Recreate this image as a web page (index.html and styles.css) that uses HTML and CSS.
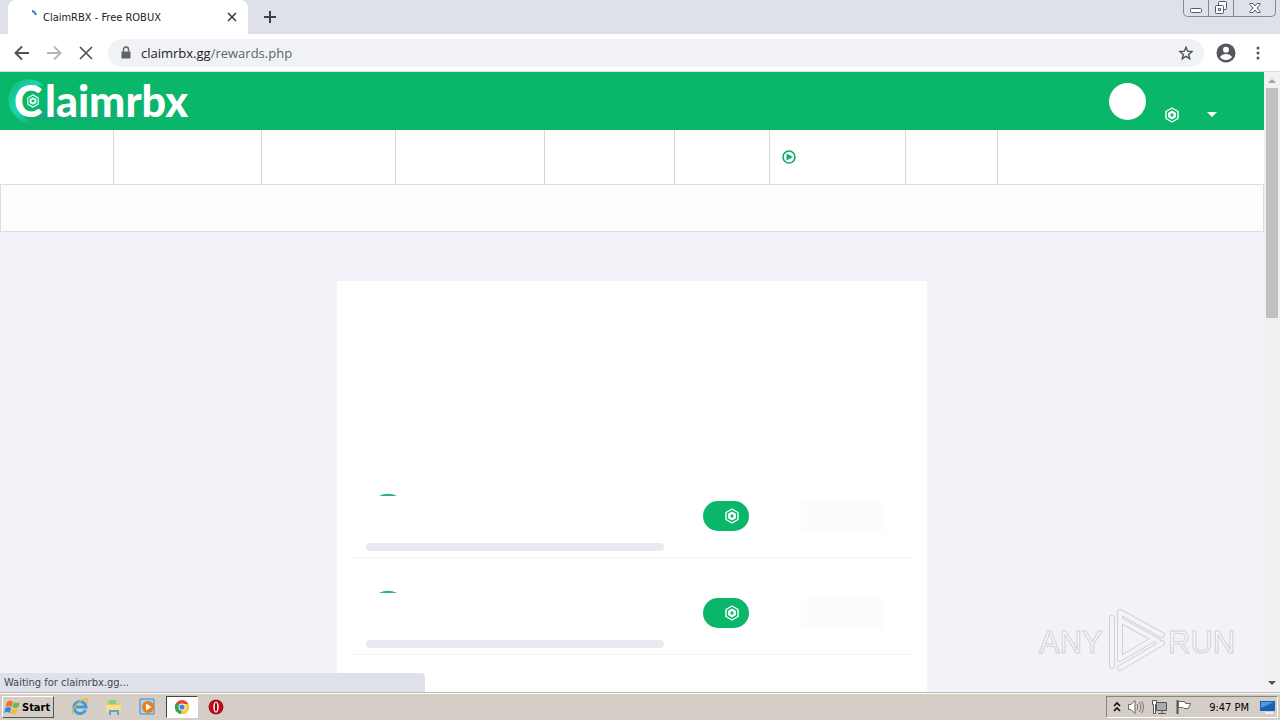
FILE: index.html
```html
<!DOCTYPE html>
<html lang="en">
<head>
<meta charset="utf-8">
<meta name="viewport" content="width=device-width, initial-scale=1">
<title>ClaimRBX - Free ROBUX</title>
<link rel="stylesheet" href="styles.css">
</head>
<body>
<svg class="defs" width="0" height="0" aria-hidden="true">
  <symbol id="coin" viewBox="0 0 16 16">
    <path d="M8 1l6 3.500v7L8 15l-6-3.500v-7z" fill="none" stroke="currentColor" stroke-width="1.400" stroke-linejoin="round"/>
    <path d="M8 3.600l3.900 2.200v4.400L8 12.400l-3.900-2.200V5.800zM6.600 6.600v2.800h2.800V6.600z" fill="currentColor" fill-rule="evenodd"/>
  </symbol>
</svg>

<header class="titlebar">
  <div class="tab">
    <svg class="spinner" width="16" height="16" viewBox="0 0 16 16"><path d="M9 2q3 .5 4 4" fill="none" stroke="#3b7dd8" stroke-width="2"/></svg>
    <span class="tab-title">ClaimRBX - Free ROBUX</span>
    <button class="plain" aria-label="Close tab"><svg width="16" height="16" viewBox="0 0 16 16"><path d="M4 4l8 8M12 4l-8 8" stroke="#3c4043" stroke-width="1.700"/></svg></button>
  </div>
  <button class="plain new-tab" aria-label="New tab"><svg width="16" height="16" viewBox="0 0 16 16"><path d="M8 2v12M2 8h12" stroke="#3c4043" stroke-width="2"/></svg></button>
  <div class="window-controls">
    <button class="wc" aria-label="Minimize"><svg width="14" height="14" viewBox="0 0 14 14"><rect x="1.500" y="7.500" width="11" height="4" rx="1" fill="#fff" stroke="#555b66"/></svg></button>
    <button class="wc" aria-label="Restore"><svg width="14" height="14" viewBox="0 0 14 14"><g fill="#fff" stroke="#555b66"><rect x="4.500" y=".5" width="8" height="8" rx="1"/><rect x="1.500" y="4.500" width="8" height="8" rx="1"/><path d="M4.500 7.500h2v2h-2z"/></g></svg></button>
    <button class="wc wc-close" aria-label="Close"><svg width="14" height="14" viewBox="0 0 14 14"><path d="M2 2.500h3l2 2.500 2-2.500h3v1L9 7l3 3.500v1H9L7 9l-2 2.500H2v-1L5 7 2 3.500z" fill="#fff" stroke="#555b66"/></svg></button>
  </div>
</header>

<div class="toolbar">
  <button class="plain" aria-label="Back"><svg width="16" height="16" viewBox="0 0 16 16"><path d="M15 8H2M8 1.500L1.500 8 8 14.500" fill="none" stroke="#505357" stroke-width="1.900"/></svg></button>
  <button class="plain" aria-label="Forward" disabled><svg width="16" height="16" viewBox="0 0 16 16"><path d="M1 8h13M8 1.500L14.500 8 8 14.500" fill="none" stroke="#b4b6b9" stroke-width="1.900"/></svg></button>
  <button class="plain" aria-label="Stop"><svg width="16" height="16" viewBox="0 0 16 16"><path d="M2 2l12 12M14 2L2 14" stroke="#505357" stroke-width="1.700"/></svg></button>
  <div class="omnibox">
    <svg width="12" height="14" viewBox="0 0 12 14"><path d="M1.500 5.500h9v7h-9z" fill="#5f6368"/><path d="M3.500 5.500V3.500a2.500 2.500 0 0 1 5 0v2" fill="none" stroke="#5f6368" stroke-width="1.400"/></svg>
    <span class="url">claimrbx.gg<span class="path">/rewards.php</span></span>
    <button class="plain" aria-label="Bookmark this page"><svg width="16" height="16" viewBox="0 0 16 16"><path d="M8 2.200l1.700 4 4.300.4-3.300 2.800 1 4.300L8 11.400l-3.700 2.300 1-4.300L2 6.600l4.300-.4z" fill="none" stroke="#4d5156" stroke-width="1.400"/></svg></button>
  </div>
  <button class="plain profile" aria-label="Profile"><svg width="20" height="20" viewBox="0 0 20 20"><circle cx="10" cy="10" r="9.500" fill="#54575c"/><circle cx="10" cy="6.800" r="3" fill="#fff"/><path d="M4 14q2-3 6-3t6 3q-2 3-6 3t-6-3z" fill="#fff"/></svg></button>
  <button class="plain menu" aria-label="Menu"><svg width="16" height="16" viewBox="0 0 16 16"><g fill="#505357"><circle cx="8" cy="3" r="1.500"/><circle cx="8" cy="8" r="1.500"/><circle cx="8" cy="13" r="1.500"/></g></svg></button>
</div>

<div class="browser-view">
  <main class="page">
    <div class="site-header">
      <a class="logo" href="#" aria-label="Claimrbx">
        <svg width="190" height="58" viewBox="0 0 190 58">
          <defs><linearGradient id="swoosh" x1="0" x2="1" y2="1"><stop offset="0" stop-color="#10b87a"/><stop offset=".45" stop-color="#1bd6ad"/><stop offset="1" stop-color="#1f9c85"/></linearGradient>
          <linearGradient id="shade"><stop offset="0" stop-color="#1aa386"/><stop offset="1" stop-color="#1aa386" stop-opacity="0"/></linearGradient></defs>
          <path d="M44 14C36 4 18 5 11 17C4 31 12 48 31 52C20 43 17 26 27 17Q34 12 44 14z" fill="url(#swoosh)"/>
          <path d="M24 44l20-8 130 0-10 12H34z" fill="url(#shade)" opacity=".7"/>
          <use href="#coin" x="26" y="22" width="14" height="14" color="#d9fff3"/>
          <text class="logo-text" y="45"><tspan x="14">C</tspan><tspan x="45">laimrbx</tspan></text>
        </svg>
      </a>
      <div class="avatar"></div>
      <svg class="balance" width="16" height="16"><use href="#coin"/></svg>
      <button class="plain account" aria-label="Account menu"><svg width="10" height="6" viewBox="0 0 10 6"><path d="M0 0h10L5 5z" fill="#fff"/></svg></button>
    </div>
    <nav class="site-nav">
      <a href="#" class="n1"></a><a href="#" class="n2"></a><a href="#" class="n3"></a><a href="#" class="n4"></a><a href="#" class="n5"></a><a href="#" class="n6"></a>
      <a href="#" class="n7" aria-label="Videos"><svg width="14" height="14" viewBox="0 0 14 14"><circle cx="7" cy="7" r="6" fill="none" stroke="#12a86a" stroke-width="1.600"/><path d="M4.500 3.500L11 7l-6.500 3.500z" fill="#0ab56a"/></svg></a>
      <a href="#" class="n8"></a>
    </nav>
    <div class="notice"></div>
    <section class="card">
      <div class="intro"></div>
      <div class="reward">
        <div class="reward-main"><svg class="sliver" width="18" height="3" viewBox="0 0 18 3"><path d="M0 3Q9-1.500 18 3z" fill="#26b583"/></svg><div class="progress"></div></div>
        <div class="pill"><svg width="16" height="16"><use href="#coin"/></svg></div>
        <button class="claim" aria-label="Claim" disabled></button>
      </div>
      <div class="reward">
        <div class="reward-main"><svg class="sliver" width="18" height="3" viewBox="0 0 18 3"><path d="M0 3Q9-1.500 18 3z" fill="#26b583"/></svg><div class="progress"></div></div>
        <div class="pill"><svg width="16" height="16"><use href="#coin"/></svg></div>
        <button class="claim" aria-label="Claim" disabled></button>
      </div>
    </section>
  </main>
  <div class="scrollbar">
    <svg width="16" height="16" viewBox="0 0 16 16"><path d="M4 11l4-4 4 4z" fill="#a3a3a3"/></svg>
    <div class="thumb"></div>
    <svg width="16" height="16" viewBox="0 0 16 16"><path d="M4 5l4 4 4-4z" fill="#505050"/></svg>
  </div>
  <div class="status">Waiting for claimrbx.gg...</div>
  <svg class="watermark" width="200" height="66" viewBox="0 0 200 66">
    <defs><linearGradient id="fade" x2="0" y2="1"><stop offset="0" stop-color="#fff"/><stop offset=".55" stop-color="#fafafc"/><stop offset="1" stop-color="#e4e4e9"/></linearGradient></defs>
    <g class="mark-text"><text x="3" y="45">ANY</text><text x="132" y="45">RUN</text></g>
    <g class="mark-shape">
      <path d="M76 10v48M84 4v47M84 4l42 23M84 12l38 21M84 60l42-25M84 51l32-19" stroke="#d2d2d8" stroke-width="6"/>
      <path d="M76 10v48M84 4v47M84 4l42 23M84 12l38 21M84 60l42-25M84 51l32-19" stroke="#f4f4f7" stroke-width="4"/>
    </g>
  </svg>
</div>

<footer class="taskbar">
  <button class="start"><svg width="17" height="16" viewBox="0 0 17 16"><path d="M3 3q3-3 6 0L7.500 8q-3-2-6 0z" fill="#ee7029"/><path d="M10 3q3 2 6 0l-1.500 5q-3 2-6 0z" fill="#72b84a"/><path d="M1.200 9q3-2 6 0l-1.500 5q-3-2-5.500 0z" fill="#328bd8"/><path d="M8 9.500q3 2 6 0L12.500 14q-3 2-6 0z" fill="#f4bd2d"/></svg>Start</button>
  <div class="launchers">
    <button class="launch" aria-label="Internet Explorer"><svg width="18" height="18" viewBox="0 0 18 18"><path d="M14.500 12A6 6 0 1 1 15 9H5" fill="none" stroke="#3d9be0" stroke-width="3"/><path d="M2 16C-1 13 9 1 15 1q3 1 1 4" fill="none" stroke="#e6b739" stroke-width="1.400"/></svg></button>
    <button class="launch" aria-label="Explorer"><svg width="18" height="18" viewBox="0 0 18 18"><path d="M2 3h5l1 2h8v9H2z" fill="#e8c75d"/><path d="M4 2h7v4H4z" fill="#8cc98c"/><path d="M1 7h15v7H1z" fill="#f6df8e"/><path d="M4 17v-5h10v5h-2v-3H6v3z" fill="#55a8db"/></svg></button>
    <button class="launch" aria-label="Media Player"><svg width="18" height="18" viewBox="0 0 18 18"><path d="M1 1h14v15H1z" fill="#a9d3f0" stroke="#478bc4"/><circle cx="9" cy="9" r="6" fill="#ed7d16"/><path d="M7 5.500L12.500 9 7 12.500z" fill="#fff"/></svg></button>
    <button class="launch active" aria-label="Chrome"><svg width="16" height="16" viewBox="0 0 16 16"><circle cx="8" cy="8" r="7" fill="#e24639"/><path d="M8 8L2 4.300A7 7 0 0 0 7 15z" fill="#30a552"/><path d="M8 8l-1 7A7 7 0 0 0 14.400 5H8z" fill="#f8cd35"/><circle cx="8" cy="8" r="3.500" fill="#fff"/><circle cx="8" cy="8" r="2.600" fill="#3e80df"/></svg></button>
    <button class="launch" aria-label="Opera"><svg width="18" height="18" viewBox="0 0 18 18"><circle cx="9" cy="9" r="7.500" fill="#b80d18"/><ellipse cx="9" cy="9" rx="2.700" ry="5.500" fill="#fff"/><ellipse cx="9" cy="9" rx="1.200" ry="4.500" fill="#8f0b14"/></svg></button>
  </div>
  <div class="tray">
    <svg width="8" height="12" viewBox="0 0 8 12"><path d="M1 5l3-3 3 3M1 10l3-3 3 3" fill="none" stroke="#111" stroke-width="1.600"/></svg>
    <svg width="18" height="16" viewBox="0 0 18 16"><path d="M1.500 5.500H4l4-4v13l-4-4H1.500z" fill="#fff" stroke="#666"/><path d="M10 5q2 3 0 6M12 3q4 5 0 10M14.500 2q4 6 0 12" fill="none" stroke="#777"/></svg>
    <svg width="18" height="16" viewBox="0 0 18 16"><path d="M5.500 3.500h10v8h-10z" fill="#aaa" stroke="#555"/><path d="M7 14.500h8M11 12v2" stroke="#555"/><path d="M1.500 1.500h4v4h-1v9h-2v-9h-1z" fill="#fff" stroke="#555"/></svg>
    <svg width="18" height="16" viewBox="0 0 18 16"><path d="M2.500 1v14" stroke="#555" stroke-width="2"/><path d="M3.500 2.500h6l1 2h5l-2 5H9l-1-1H3.500z" fill="#fff" stroke="#666"/></svg>
    <time class="clock">9:47 PM</time>
    <svg width="16" height="16" viewBox="0 0 16 16"><path d="M0 2h15v10H0z" fill="#1760b5"/><path d="M1 3h13L1 9z" fill="#4a9ae6"/><path d="M5 14h8" stroke="#eee" stroke-width="2"/></svg>
  </div>
</footer>
</body>
</html>
```

FILE: styles.css
```css
* { box-sizing: border-box; }
body {
  margin: 0;
  height: 100vh;
  display: flex;
  flex-direction: column;
  overflow: hidden;
  font-family: "DejaVu Sans Condensed", "DejaVu Sans", sans-serif;
  font-size: 11px;
  color: #202124;
  background: #fff;
}
svg { display: block; flex: none; }
button { font: inherit; color: inherit; }
.defs { position: absolute; }
.plain { border: 0; padding: 0; background: none; display: flex; flex: none; }

.titlebar { display: flex; height: 34px; flex: none; background: #dee1e9; padding-left: 8px; }
.tab { display: flex; align-items: center; gap: 4px; width: 240px; padding: 0 8px 0 15px; background: #fff; border-radius: 8px 8px 0 0; }
.tab-title { flex: 1; white-space: nowrap; }
.new-tab { align-self: center; margin-left: 14px; }
.window-controls { display: flex; height: 17px; margin: 0 4px 0 auto; border: 1px solid #83899a; border-top: 0; border-radius: 0 0 5px 5px; }
.wc { width: 25px; padding: 1px 0 0; border: 0; border-right: 1px solid #83899a; background: none; display: flex; justify-content: center; }
.wc-close { width: 41px; border-right: 0; }

.toolbar { display: flex; align-items: center; height: 38px; flex: none; gap: 16px; padding: 0 14px; border-bottom: 1px solid #dcdee0; }
.omnibox { display: flex; align-items: center; flex: 1; height: 28px; gap: 9px; margin: 0 -4px 0 -2px; padding: 0 10px 0 12px; border-radius: 14px; background: #f0f2f5; }
.url { flex: 1; font: 13px/18px "Open Sans", "Noto Sans", sans-serif; }
.path { color: #5f6368; }
.menu { margin-left: -2px; }

.browser-view { position: relative; display: flex; flex: 1; min-height: 0; overflow: hidden; }
.page { flex: 1; display: flex; flex-direction: column; background: #f2f2f8; }
.site-header { display: flex; flex: none; height: 58px; padding-right: 47px; background: #0ab66a; color: #fff; }
.logo { margin-right: auto; }
.logo-text { font: 900 43px Lato, sans-serif; fill: #fff; }
.avatar { width: 37px; height: 37px; margin-top: 11px; border-radius: 50%; background: #fff; }
.balance { margin: 35px 27px 0 18px; }
.account { margin-top: 40px; }
.site-nav { display: flex; flex: none; height: 54px; background: #fff; }
.site-nav a { display: flex; align-items: center; border-right: 1px solid #d8d8d8; padding-left: 12px; }
.n1 { width: 114px; }
.n2 { width: 148px; }
.n3 { width: 134px; }
.n4 { width: 149px; }
.n5 { width: 130px; }
.n6 { width: 95px; }
.n7 { width: 136px; }
.n8 { width: 92px; }
.notice { flex: none; height: 48px; border: 1px solid #dddde0; background: #fdfdfd; }
.card { flex: 1; width: 590px; max-width: 100%; margin: 49px auto 0; padding: 0 15px; background: #fff; }
.intro { height: 180px; }
.reward { display: flex; align-items: flex-start; height: 97px; padding: 40px 29px 0 14px; border-bottom: 1px solid #f2f2f4; }
.reward-main { flex: 1; margin-right: 39px; margin-top: -8px; }
.sliver { margin: 0 0 47px 13px; }
.progress { height: 8px; border-radius: 4px; background: #e7eaee; }
.pill { display: flex; align-items: center; justify-content: flex-end; width: 46px; height: 30px; padding-right: 9px; border-radius: 15px; background: #0ab66a; color: #fff; }
.claim { width: 82px; height: 32px; margin-left: 52px; border: 0; border-radius: 3px; background: #fcfcfc; }
.scrollbar { width: 16px; display: flex; flex-direction: column; background: #f1f1f1; }
.thumb { height: 230px; margin: 0 2px auto; background: #c1c1c1; }
.status { position: absolute; left: 0; bottom: 0; width: 425px; height: 19px; padding: 3px 4px; line-height: 14px; border-radius: 0 4px 0 0; background: #dee1e9; color: #44474c; }
.watermark { position: absolute; right: 44px; bottom: 18px; }
.mark-text { font: 31px "Liberation Sans", sans-serif; fill: url(#fade); stroke: #d2d2d8; stroke-width: 1px; }
.mark-shape { fill: none; stroke-linecap: round; stroke-linejoin: round; }

.taskbar { display: flex; align-items: center; height: 28px; flex: none; padding: 1px 2px 0; border-top: 1px solid #bdb9b1; background: #d5cec7; box-shadow: inset 0 1px #fff; }
.start { display: flex; align-items: center; gap: 1px; width: 52px; height: 22px; padding: 0 1px; border: 1px solid; border-color: #fff #555 #555 #fff; background: #d5cec7; font-weight: bold; color: #000; }
.launchers { display: flex; margin-left: 10px; gap: 2px; }
.launch { display: flex; align-items: center; justify-content: center; width: 32px; height: 22px; padding: 0; border: 0; background: none; }
.active { background: #fff; border: 1px solid; border-color: #444 #fff #fff #444; }
.tray { display: flex; align-items: center; gap: 6px; height: 22px; margin-left: auto; padding: 0 1px 0 6px; border: 1px solid; border-color: #8a857e #fff #fff #8a857e; }
.clock { margin: 0 5px 0 10px; color: #000; }
```
